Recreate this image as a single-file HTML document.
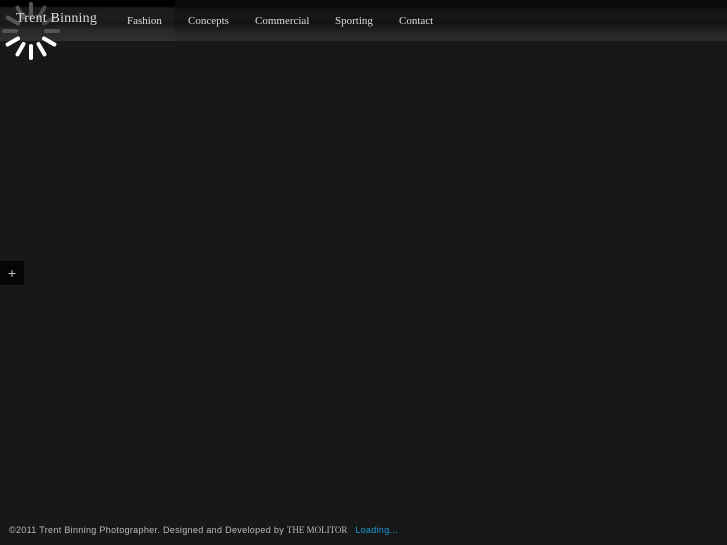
<!DOCTYPE html>
<html><head><meta charset="utf-8"><style>
html,body{margin:0;padding:0;width:727px;height:545px;background:#181818;overflow:hidden;position:relative;font-family:"Liberation Serif",serif}
.bar{position:absolute;left:0;top:0;width:727px;height:41px;background:linear-gradient(#0b0b0b 0,#0b0b0b 8px,#151515 9px,#161616 20px,#121212 23px,#1c1c1c 28px,#262626 33px,#2b2b2b 41px)}
.bar2{position:absolute;left:0;top:0;width:175px;height:41px;background:linear-gradient(#000 0,#000 6px,#1a1a1a 8px,#1d1d1d 20px,#191919 24px,#282828 30px,#303030 41px)}
.logo{position:absolute;left:16px;top:11px;color:#ddd;font-size:14px;letter-spacing:.2px}
.nav{position:absolute;top:15px;color:#ddd;font-size:11px}
.plus{position:absolute;left:0;top:261px;width:24px;height:24px;background:#050505;color:#ccc;font:14px "Liberation Sans",sans-serif;text-align:center;line-height:24px}
.foot{position:absolute;left:9px;top:525px;font:9px "Liberation Sans",sans-serif;color:#bbb;letter-spacing:.32px}
.foot span{font-family:"Liberation Serif",serif;letter-spacing:0}
.foot b{font-weight:normal;color:#1a9ad6;margin-left:5px}
svg{position:absolute;left:0;top:0}
</style></head><body>
<div class="bar"></div><div class="bar2"></div>
<svg width="62" height="62" viewBox="0 0 62 62">
<g stroke-linecap="round" stroke-width="4">
<line x1="31" y1="4" x2="31" y2="16" stroke="#555" transform="rotate(0 31 31)"/>
<line x1="31" y1="4" x2="31" y2="16" stroke="#4a4a4a" transform="rotate(30 31 31)"/>
<line x1="31" y1="4" x2="31" y2="16" stroke="#444" transform="rotate(60 31 31)"/>
<line x1="31" y1="4" x2="31" y2="16" stroke="#555" transform="rotate(90 31 31)"/>
<line x1="31" y1="4" x2="31" y2="16" stroke="#fff" transform="rotate(120 31 31)"/>
<line x1="31" y1="4" x2="31" y2="16" stroke="#fff" transform="rotate(150 31 31)"/>
<line x1="31" y1="4" x2="31" y2="16" stroke="#fff" transform="rotate(180 31 31)"/>
<line x1="31" y1="4" x2="31" y2="16" stroke="#fff" transform="rotate(210 31 31)"/>
<line x1="31" y1="4" x2="31" y2="16" stroke="#fff" transform="rotate(240 31 31)"/>
<line x1="31" y1="4" x2="31" y2="16" stroke="#555" transform="rotate(270 31 31)"/>
<line x1="31" y1="4" x2="31" y2="16" stroke="#555" transform="rotate(300 31 31)"/>
<line x1="31" y1="4" x2="31" y2="16" stroke="#555" transform="rotate(330 31 31)"/>
</g></svg>
<div class="logo">Trent Binning</div>
<div class="nav" style="left:127px">Fashion</div>
<div class="nav" style="left:188px">Concepts</div>
<div class="nav" style="left:255px">Commercial</div>
<div class="nav" style="left:335px">Sporting</div>
<div class="nav" style="left:399px">Contact</div>
<div class="plus">+</div>
<div class="foot">©2011 Trent Binning Photographer. Designed and Developed by <span>THE MOLITOR</span> <b>Loading...</b></div>
</body></html>
